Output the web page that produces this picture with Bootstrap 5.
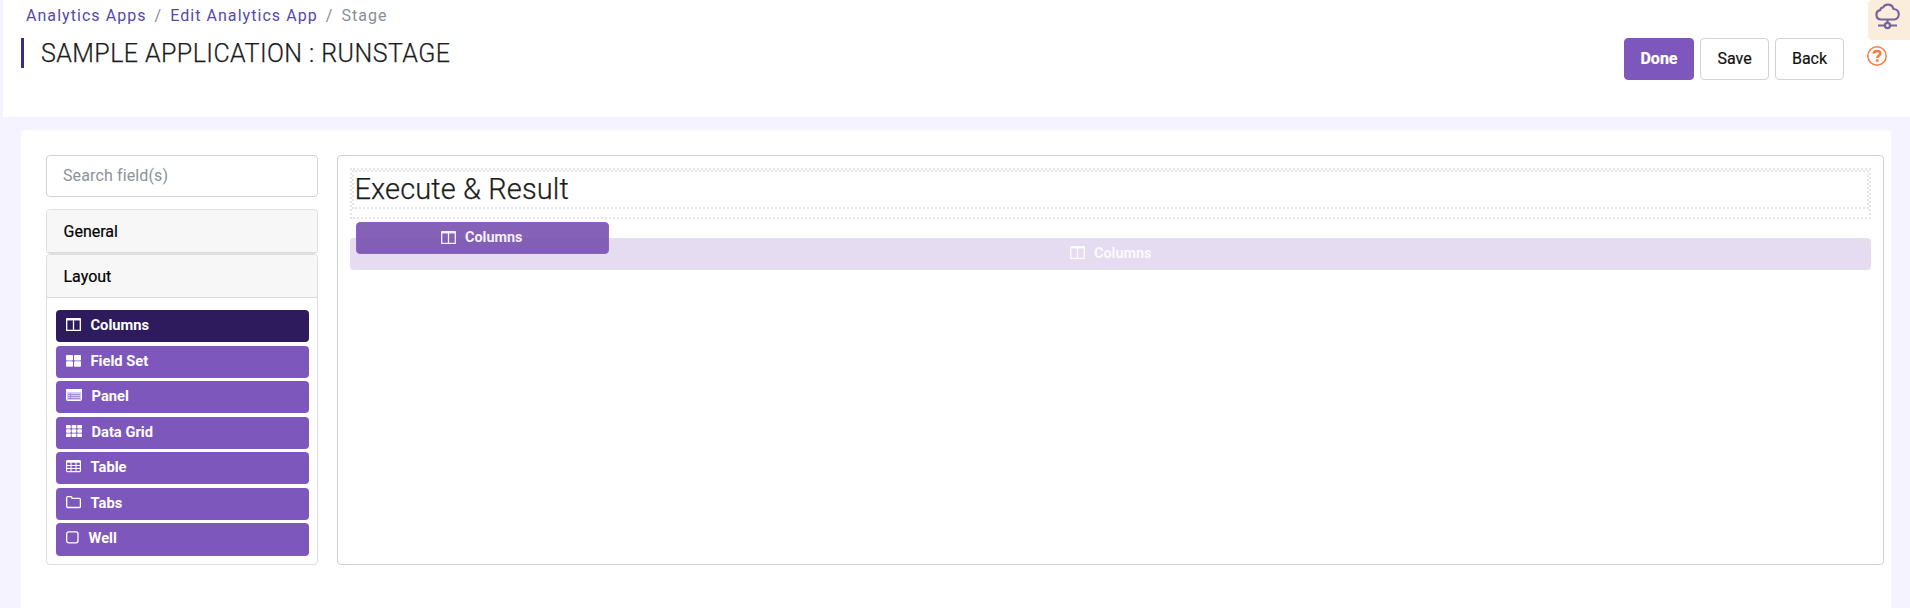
<!DOCTYPE html>
<html lang="en">
<head>
<meta charset="utf-8">
<title>Stage</title>
<link href="https://cdn.jsdelivr.net/npm/bootstrap@5.3.0/dist/css/bootstrap.min.css" rel="stylesheet">
<style>
body{font-family:Roboto,"Liberation Sans",sans-serif;background:#f5f3ff;color:#1c1c1c;height:608px;overflow:hidden;font-size:16px}
.page-top{margin-left:3px;height:117px;padding-left:18px}
.crumbs{--bs-breadcrumb-divider-color:#868e96;letter-spacing:1.05px;line-height:24px;padding:4px 0 0 5px;height:38px}
.crumbs a{color:#5448b0;text-decoration:none}
.crumbs .active{color:#868e96}
.app-title{border-left:3px solid #3b2a86;height:30px;line-height:32px;padding-left:17px;font-size:25px;font-weight:300;letter-spacing:.43px;-webkit-text-stroke:.25px #1c1c1c}
.act{width:69px;height:42px;border-radius:4px;padding:0 0 1px;border-color:#ced4da;color:#111;font-weight:400;-webkit-text-stroke:.2px;font-size:16px;line-height:24px}
.act-main{background:#7e57bd;border-color:#7e57bd;color:#fff;font-weight:700;width:70px}
.actions{gap:6px;margin-top:38px;margin-right:24px}
.side-tools{width:42px}
.cloud{height:40px;background:#fbeddb;border-radius:4px 0 0 4px}
.help{margin:6px 0 0 -1px}
.work{margin:13px 19px 0 21px;height:500px;border-radius:4px 4px 0 0;padding:25px 7px 0 25px;gap:19px}
.tools{width:272px}
.search{height:42px;border:1px solid #ced4da;border-radius:4px;padding:0 15px 2px 16px;font-size:16px;line-height:24px;letter-spacing:.12px;margin-bottom:12px}
.search::placeholder{color:#8b939b}
.group{border:1px solid #dfdfdf;border-radius:4px;--bs-card-cap-bg:#f7f7f7}
.group-head{height:43px;padding:0 16.5px;line-height:43px;font-weight:400;-webkit-text-stroke:.2px;color:#000;border-bottom:1px solid #dcdcdc}
.group-open{height:311px}
.items{padding:12px 8px 0 9px;gap:3.2px}
.comp{height:32.35px;border-radius:4px;background:#7e57bd;color:#fff;font-weight:700;font-size:14.7px;line-height:31px;padding-left:10px;flex:none}
.comp svg{display:block;flex:none}
.comp-on{background:#2d1b5e}
.canvas{width:1547px;height:410px;border:1px solid #ced0da;border-radius:4px;padding:12px}
.zone{border:2px dotted #e5e5e5;height:51px}
.zone-in{border:2px dotted #e5e5e5;height:39px;font-size:29px;font-weight:300;line-height:34px;letter-spacing:.12px;padding-left:.5px;-webkit-text-stroke:.25px #1c1c1c}
.ghost{margin-top:19px;background:#e5dcf2;color:rgba(255,255,255,.85);font-size:14.4px;padding:0}
.dragged{left:18px;top:66px;width:253px;height:32px;background:rgba(116,76,174,.88);border:1px solid #8c62c9;padding:0 2px 0 0;font-size:14.4px;line-height:29px;color:#f4effa}
</style>
</head>
<body>
<svg class="d-none">
<symbol id="columns" viewBox="0 0 15 13"><path d="M.7 1.5h13.6v10.8H.7zM7.5 1v11.5" fill="none" stroke="currentColor" stroke-width="1.3"/><path d="M0 1a1 1 0 0 1 1-1h13a1 1 0 0 1 1 1v1.2H0z" fill="currentColor"/></symbol>
</svg>
<header class="page-top bg-white d-flex">
  <div class="flex-grow-1">
    <ol class="breadcrumb crumbs mb-0">
      <li class="breadcrumb-item"><a href="#">Analytics Apps</a></li>
      <li class="breadcrumb-item"><a href="#">Edit Analytics App</a></li>
      <li class="breadcrumb-item active">Stage</li>
    </ol>
    <h1 class="app-title mb-0">SAMPLE APPLICATION : RUNSTAGE</h1>
  </div>
  <div class="actions d-flex align-items-start">
    <button class="btn act act-main">Done</button>
    <button class="btn act bg-white">Save</button>
    <button class="btn act bg-white">Back</button>
  </div>
  <div class="side-tools">
    <div class="cloud"><svg class="d-block" width="42" height="40" fill="none" stroke="#76659b" stroke-width="2.2"><path d="M13 19.500a4.700 4.700 0 0 1-.8-9.300C12.500 7.800 14 7.600 15 7.500a5.700 5.700 0 0 1 10.500 1.500a5.300 5.300 0 0 1 1 10.500zM19.500 20v3M10 25.500h6.500M22.500 25.500H29"/><circle cx="19.500" cy="25.500" r="2.600"/></svg></div>
    <svg class="help d-block" width="20" height="20" fill="none" stroke="#fc7b3e"><circle cx="10" cy="10" r="9.200" stroke-width="1.500"/><path d="M6.600 7.700C6.800 5.600 8.200 4.900 10 4.900c2 0 3.400 1 3.400 2.700 0 2.100-3.200 2-3.200 4.500" stroke-width="2.500"/><path d="M10.200 13.300v2.500" stroke-width="2.800"/></svg>
  </div>
</header>
<main class="work bg-white d-flex align-items-start">
  <aside class="tools">
    <input class="form-control search" placeholder="Search field(s)">
    <div class="card group"><div class="card-header group-head">General</div></div>
    <div class="card group group-open">
      <div class="card-header group-head">Layout</div>
      <div class="items d-flex flex-column">
        <div class="comp comp-on d-flex"><svg class="mt-2 me-2" width="15" height="13"><use href="#columns"/></svg><span>&#8202;Columns</span></div>
        <div class="comp d-flex"><svg class="mt-2 me-2" width="15" height="13" fill="#fff"><rect y="1" width="7" height="5.500" rx="1"/><rect x="8" y="1" width="7" height="5.500" rx="1"/><rect y="7.300" width="7" height="5.500" rx="1"/><rect x="8" y="7.300" width="7" height="5.500" rx="1"/></svg><span>&#8202;Field Set</span></div>
        <div class="comp d-flex"><svg class="mt-2 me-2" width="16" height="13"><rect x=".5" y=".5" width="15" height="11" rx="1" fill="#d8caee" stroke="#fff"/><path d="M0 0h16v3H0z" fill="#fff"/><path d="M2 5.500h12M2 7.500h12M2 9.500h12M4.500 4v6" stroke="#9978cc" stroke-width=".8"/></svg><span>&#8202;Panel</span></div>
        <div class="comp d-flex"><svg class="mt-2 me-2" width="16" height="13" fill="#fff"><g id="r"><rect width="4.800" height="3.600" rx=".8"/><rect x="5.600" width="4.800" height="3.600" rx=".8"/><rect x="11.200" width="4.800" height="3.600" rx=".8"/></g><use href="#r" y="4.200"/><use href="#r" y="8.400"/></svg><span>&#8202;Data Grid</span></div>
        <div class="comp d-flex"><svg class="mt-2 me-2" width="15" height="13" fill="none" stroke="#fff"><rect x=".6" y=".7" width="13.800" height="11" rx="1" stroke-width="1.200"/><path d="M0 1.700h15" stroke-width="2"/><path d="M1 5.500h13M1 8.500h13M5 2v10M10 2v10"/></svg><span>&#8202;Table</span></div>
        <div class="comp d-flex"><svg class="mt-2 me-2" width="15" height="13" fill="none" stroke="#fff" stroke-width="1.300"><path d="M.7 1.700Q.7.700 1.700.700h3.200Q6 .700 6 1.700V2.400h7.300q1.100 0 1.100 1.100v6.900q0 1.100-1.100 1.100H1.700q-1 0-1-1.100z"/></svg><span>&#8202;Tabs</span></div>
        <div class="comp d-flex"><svg class="mt-2 me-2" width="13" height="13" fill="none" stroke="#fff" stroke-width="1.300"><rect x=".7" y=".8" width="11.300" height="11" rx="2"/></svg><span>&#8202;Well</span></div>
      </div>
    </div>
  </aside>
  <section class="canvas position-relative">
    <div class="zone"><div class="zone-in">Execute &amp; Result</div></div>
    <div class="comp ghost d-flex justify-content-center"><svg class="mt-2 me-2" width="15" height="13"><use href="#columns"/></svg><span>&#8202;Columns</span></div>
    <div class="comp dragged d-flex justify-content-center position-absolute"><svg class="mt-2 me-2" width="15" height="13"><use href="#columns"/></svg><span>&#8202;Columns</span></div>
  </section>
</main>
<script src="https://cdn.jsdelivr.net/npm/bootstrap@5.3.0/dist/js/bootstrap.bundle.min.js"></script>
</body>
</html>
